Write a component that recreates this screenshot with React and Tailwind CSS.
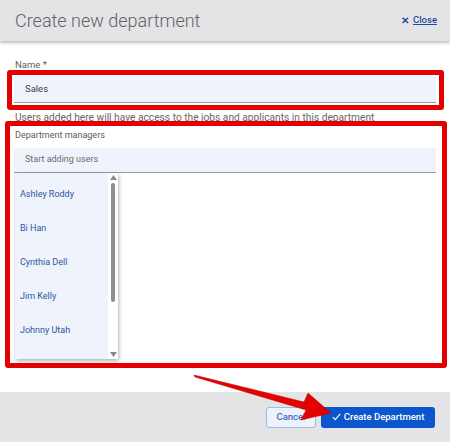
import React from "react";

const users = ["Ashley Roddy", "Bi Han", "Cynthia Dell", "Jim Kelly", "Johnny Utah"];

export default function App() {
  return (
    <div
      className="relative w-[450px] h-[442px] bg-white overflow-hidden flex flex-col"
      style={{ fontFamily: "Roboto, 'Liberation Sans', sans-serif" }}
    >
      {/* Header */}
      <div className="relative z-10 h-[41px] shrink-0 bg-[#e4e4e6] flex items-center justify-between pl-[15px] pr-[13px] shadow-[0_2px_3px_rgba(0,0,0,0.25)]">
        <h1 className="text-[18px] font-light text-[#5f6368] leading-none">Create new department</h1>
        <a className="flex items-center gap-[4px] text-[9.5px] text-[#1d4f9e] font-medium">
          <span className="text-[9.5px] font-bold leading-none">✕</span>
          <span className="underline">Close</span>
        </a>
      </div>

      {/* Body */}
      <div className="flex-1 px-[14px] pt-[18px]">
        <div className="pl-[1px] text-[9.5px] leading-[12px] text-[#5c5c5c]">Name *</div>
        <div className="mt-[5px] h-[27px] bg-[#eef3fc] border-b border-[#9a9a9a] flex items-center pl-[11px] text-[9.5px] text-[#444]">
          Sales
        </div>
        <div className="mt-[9px] pl-[1px] text-[10.2px] leading-[12px] text-[#666] whitespace-nowrap">
          Users added here will have access to the jobs and applicants in this department
        </div>
        <div className="mt-[5px] pl-[1px] text-[9px] leading-[12px] text-[#5c5c5c]">Department managers</div>
        <div className="mt-[7px] h-[25px] bg-[#eef3fc] border-b border-[#9a9a9a] flex items-center pl-[11px] text-[9px] text-[#6b6b6b]">
          Start adding users
        </div>
        <div className="ml-[1px] w-[103px] h-[186px] flex bg-white shadow-[1px_2px_4px_rgba(0,0,0,0.3)] overflow-hidden">
          <div className="flex-1 bg-[#eef3fc] pt-[5px]">
            {users.map((u) => (
              <div key={u} className="h-[34px] flex items-center pl-[5px] text-[9px] text-[#2d56a0]">
                {u}
              </div>
            ))}
          </div>
          <div className="w-[10px] bg-white flex flex-col items-center pt-[2px] pb-[2px]">
            <svg width="7" height="5" viewBox="0 0 7 5"><polygon points="3.5,0 7,5 0,5" fill="#888" /></svg>
            <div className="mt-[3px] w-[4px] h-[119px] rounded-full bg-[#8f8f8f]" />
            <div className="flex-1" />
            <svg width="7" height="5" viewBox="0 0 7 5"><polygon points="0,0 7,0 3.5,5" fill="#888" /></svg>
          </div>
        </div>
      </div>

      {/* Footer */}
      <div className="h-[50px] shrink-0 bg-[#e4e4e6] flex items-center justify-end gap-[5px] pr-[15px]">
        <button className="h-[21px] w-[50px] rounded-[3px] border border-[#9cb9e4] bg-[#eef3fb] text-[9.5px] font-medium text-[#3a6cc2] flex items-center justify-center">
          Cancel
        </button>
        <button className="h-[21px] w-[114px] rounded-[3px] bg-[#0b55cd] text-[9.5px] font-medium text-white flex items-center justify-center gap-[3px]">
          <svg width="9" height="8" viewBox="0 0 9 8"><path d="M0.8 4.2 L3.2 6.6 L8.3 0.8" fill="none" stroke="white" strokeWidth="1.1" /></svg>
          Create Department
        </button>
      </div>

      {/* Annotation overlays */}
      <div className="absolute left-[7px] top-[70px] w-[437px] h-[40px] border-[5px] border-[#e30000] rounded-[3px] pointer-events-none" />
      <div className="absolute left-[5px] top-[121px] w-[442px] h-[247px] border-[5px] border-[#e30000] rounded-[3px] pointer-events-none" />
      <svg className="absolute left-0 top-0 pointer-events-none" width="450" height="442" viewBox="0 0 450 442">
        <polygon
          points="194,375 304,402 308,393 331,413 301,420 306,410 195,377"
          fill="#e30000"
          stroke="#c40000"
          strokeWidth="0.5"
          strokeLinejoin="round"
        />
      </svg>
    </div>
  );
}
